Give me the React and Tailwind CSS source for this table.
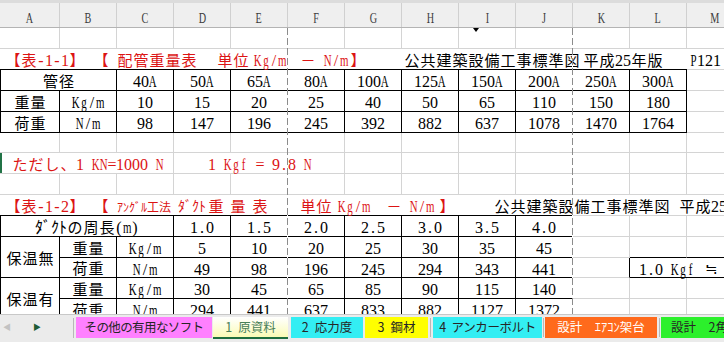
import React from "react";

// Excel-like sheet: 配管重量表 / ダクト重量表
const FONT = "font-['Liberation_Serif','Noto_Sans_CJK_JP',serif]";
const RED = "text-[#dc1414]";
const COLS = ["A", "B", "C", "D", "E", "F", "G", "H", "I", "J", "K", "L", "M"];

const isKana = (code) => code >= 0xff61 && code <= 0xff9f;

// half-width chars on an 8px grid (like ＭＳ 明朝), full-width ones on 16px
const Txt = ({ s, kw = "w-[8px]" }) =>
  Array.from(s).map((ch, i) => {
    const code = ch.charCodeAt(0);
    if (code < 128)
      return (
        <span key={i} className="flex w-[8px] shrink-0 justify-center">
          <span className={/[A-Za-z]/.test(ch) ? "scale-x-[0.68]" : ""}>{ch === " " ? "\u00a0" : ch}</span>
        </span>
      );
    if (isKana(code))
      return (
        <span key={i} className={`flex ${kw} shrink-0 justify-center`}>
          {ch}
        </span>
      );
    return (
      <span key={i} className="flex w-[16px] shrink-0 justify-center text-[15px]">
        {ch}
      </span>
    );
  });

const Seg = ({ w = "", s, red, cls = "", kw }) => (
  <span className={`flex shrink-0 items-center ${w} ${red ? RED : "text-black"} ${cls}`}>
    <Txt s={s} kw={kw} />
  </span>
);

const TITLES = {
  1: (
    <div className="flex shrink-0 pl-[5px]">
      <Seg w="w-[88px]" s="【表-1-1】" red />
      <Seg w="w-[24px]" s="【" red />
      <Seg w="w-[100px]" s="配管重量表" red />
      <Seg w="w-[37px]" s="単位" red />
      <Seg w="w-[46px]" s="Kg/m" red />
      <Seg w="w-[24px]" s="－" red />
      <Seg w="w-[26px]" s="N/m" red />
      <Seg w="w-[54px]" s="】" red />
      <Seg w="w-[179px]" s="公共建築設備工事標準図" />
      <Seg w="w-[106px]" s="平成25年版" />
      <Seg s="P121" />
    </div>
  ),
  2: (
    <div className="flex shrink-0 pl-[5px]">
      <Seg w="w-[88px]" s="【表-1-2】" red />
      <Seg w="w-[24px]" s="【" red />
      <span className={`flex w-[61px] shrink-0 items-center pt-[1px] text-[12px] ${RED}`}>ｱﾝｸﾞﾙ工法</span>
      <span className={`flex w-[30px] shrink-0 items-center text-[14px] ${RED}`}>ﾀﾞｸﾄ</span>
      <Seg w="w-[92px]" s="重量表" red cls="gap-[6px]" />
      <Seg w="w-[38px]" s="単位" red />
      <Seg w="w-[48px]" s="Kg/m" red />
      <Seg w="w-[24px]" s="－" red />
      <Seg w="w-[29px]" s="N/m" red />
      <Seg w="w-[55px]" s="】" red />
      <Seg w="w-[185px]" s="公共建築設備工事標準図" />
      <Seg s="平成25" />
    </div>
  ),
  3: (
    <div className="flex shrink-0 pl-[12px]">
      <Seg w="w-[64px]" s="ただし、" red />
      <Seg w="w-[132px]" s="1 KN=1000 N" red />
      <Seg s="1 Kgf = 9.8 N" red />
    </div>
  ),
};

const blanks = (n, extra = {}) => Array.from({ length: n }, () => ({ ...extra }));
const t = (s, extra = {}) => ({ s: String(s), tb: true, ...extra });

const rows = [
  blanks(13),
  [{ title: 1, hideR: true }, ...blanks(12, { hideR: true })],
  [t("管径", { cs: 2 }), ...["40A", "50A", "65A", "80A", "100A", "125A", "150A", "200A", "250A", "300A"].map((v) => t(v)), {}],
  [t("重量"), t("Kg/m"), ...[10, 15, 20, 25, 40, 50, 65, 110, 150, 180].map((v) => t(v)), {}],
  [t("荷重"), t("N/m"), ...[98, 147, 196, 245, 392, 882, 637, 1078, 1470, 1764].map((v) => t(v)), {}],
  blanks(13),
  [
    { title: 3, hideR: true, cls: "shadow-[inset_2px_0_0_#217346]" },
    { hideR: true },
    {},
    { hideR: true },
    { hideR: true },
    ...blanks(8),
  ],
  blanks(13),
  [{ title: 2, hideR: true }, ...blanks(12, { hideR: true })],
  [t("ﾀﾞｸﾄの周長(m)", { cs: 3 }), ...["1.0", "1.5", "2.0", "2.5", "3.0", "3.5", "4.0"].map((v) => t(v)), ...blanks(3)],
  [t("保温無", { rs: 2 }), t("重量"), t("Kg/m"), ...[5, 10, 20, 25, 30, 35, 45].map((v) => t(v)), ...blanks(3)],
  [t("荷重"), t("N/m"), ...[49, 98, 196, 245, 294, 343, 441].map((v) => t(v)), {}, t("1.0 Kgf ≒", { cs: 2, left: true })],
  [t("保温有", { rs: 2 }), t("重量"), t("Kg/m"), ...[30, 45, 65, 85, 90, 115, 140].map((v) => t(v)), ...blanks(3)],
  [t("荷重"), t("N/m"), ...[294, 441, 637, 833, 882, 1127, 1372].map((v) => t(v)), ...blanks(3)],
];

// place cells like grid auto-placement and work out which borders are black
const cells = (() => {
  const occ = rows.map(() => Array(13).fill(null));
  const out = [];
  rows.forEach((row, r) => {
    let c = 0;
    row.forEach((spec) => {
      while (occ[r][c]) c++;
      const cell = { cs: 1, rs: 1, ...spec, r, c };
      for (let i = r; i < r + cell.rs; i++) for (let j = c; j < c + cell.cs; j++) occ[i][j] = cell;
      out.push(cell);
      c += cell.cs;
    });
  });
  out.forEach((cell) => {
    const right = occ[cell.r][cell.c + cell.cs];
    const below = occ[cell.r + cell.rs]?.[cell.c];
    if (cell.tb || right?.tb) cell.br = "border-r border-r-black";
    else if (cell.hideR) cell.br = "";
    else cell.br = "border-r border-r-[#d4d4d4]";
    cell.bb = cell.tb || below?.tb ? "border-b border-b-black" : "border-b border-b-[#d4d4d4]";
    cell.bl = cell.tb && cell.c === 0 ? "border-l border-l-black" : "";
  });
  return out;
})();

function Cell({ cell }) {
  const span = `${cell.cs === 2 ? "col-span-2" : cell.cs === 3 ? "col-span-3" : ""} ${cell.rs === 2 ? "row-span-2" : ""}`;
  const align = cell.title || cell.left ? "justify-start" : "justify-center";
  let content = null;
  if (cell.title) content = TITLES[cell.title];
  else if (cell.s) content = <Txt s={cell.s} />;
  return (
    <div
      className={`flex items-center whitespace-nowrap pt-[4px] ${align} ${span} ${cell.br} ${cell.bb} ${cell.bl} ${
        cell.title ? "relative z-10" : ""
      } ${cell.left ? "pl-[9px]" : ""} ${cell.cls ?? ""}`}
    >
      {content}
    </div>
  );
}

function Header() {
  return (
    <>
      <div className="h-[3px] bg-[#dcdcdc]" />
      <div className="flex h-[25px] border-b border-[#b4b4b4] bg-[#efefef]">
        {COLS.map((c, i) => (
          <div
            key={c}
            className={`${i === 0 ? "w-[60px]" : "w-[57px]"} flex shrink-0 items-center justify-center border-r border-[#d0d0d0] pt-[7px] text-[15px] text-[#3c3c3c]`}
          >
            <Txt s={c} />
          </div>
        ))}
      </div>
    </>
  );
}

function Tabs() {
  return (
    <div className="flex h-[28px] items-start border-t border-[#c8c8c8] bg-[#ebebeb] pt-[1px] font-['Noto_Sans_CJK_JP',sans-serif] text-[12.5px] leading-none">
      <div className="flex h-[22px] w-[73px] shrink-0 items-center">
        <span className="ml-[3px] text-[8px] text-[#c2c2c2]">◀</span>
        <span className="ml-[22px] text-[8px] text-[#1f5c36]">▶</span>
      </div>
      <div className="mt-[2px] h-[20px] w-px shrink-0 bg-[#b8b8b8]" />
      <div className="ml-[2px] mt-[1px] flex h-[21px] w-[136px] shrink-0 items-center justify-center bg-[#ff80ff] tracking-[-0.6px] text-[#262626]">
        その他の有用なソフト
      </div>
      <div className="ml-[1px] mt-[1px] flex h-[22px] w-[75px] shrink-0 items-center justify-center border-b-2 border-[#1e6e3e] bg-linear-to-b from-white to-[#fbfbb4] text-[#4a8058]">
        1{"\u2002"}原資料
      </div>
      <div className="ml-[3px] mt-[1px] flex h-[21px] w-[72px] shrink-0 items-center justify-center bg-[#33eef3] text-[#262626]">
        2{"\u2002"}応力度
      </div>
      <div className="ml-[2px] mt-[1px] flex h-[21px] w-[63px] shrink-0 items-center justify-center bg-[#ffff00] text-[#262626]">
        3{"\u2002"}鋼材
      </div>
      <div className="ml-[2px] mt-[2px] h-[19px] w-px shrink-0 bg-[#b8b8b8]" />
      <div className="ml-[2px] mt-[1px] flex h-[21px] w-[109px] shrink-0 items-center justify-center bg-[#33eef3] tracking-[-0.4px] text-[#262626]">
        4{"\u2002"}アンカーボルト
      </div>
      <div className="ml-[1px] mt-[2px] h-[19px] w-px shrink-0 bg-[#b8b8b8]" />
      <div className="ml-[1px] mt-[1px] flex h-[21px] w-[112px] shrink-0 items-center justify-center bg-[#ff6a1c] text-white">
        設計　ｴｱｺﾝ架台
      </div>
      <div className="ml-[2px] mt-[2px] h-[19px] w-px shrink-0 bg-[#b8b8b8]" />
      <div className="ml-[1px] mt-[1px] flex h-[21px] w-[110px] shrink-0 items-center overflow-hidden whitespace-nowrap bg-[#2cf02c] pl-[10px] text-[#262626]">
        設計　2角形架台
      </div>
    </div>
  );
}

export default function App() {
  return (
    <div className={`h-[342px] w-[724px] overflow-hidden bg-white ${FONT} text-[16px] leading-none`}>
      <div className="relative h-[314px] overflow-hidden">
        <Header />
        <div className="grid w-max grid-cols-[60px_repeat(12,57px)] grid-rows-[21px_21px_21px_21px_21px_20px_21px_21px_21px_21px_21px_20px_21px_21px] text-black">
          {cells.map((cell, i) => (
            <Cell key={i} cell={cell} />
          ))}
        </div>
        {/* page break lines */}
        <div className="absolute left-[287px] top-[28px] z-20 h-[286px] w-px bg-[repeating-linear-gradient(to_bottom,#8c8c8c_0px,#8c8c8c_7px,#ffffff_7px,#ffffff_10px)]" />
        <div className="absolute left-[572px] top-[28px] z-20 h-[286px] w-px bg-[repeating-linear-gradient(to_bottom,#8c8c8c_0px,#8c8c8c_7px,#ffffff_7px,#ffffff_10px)]" />
        <div className="absolute left-[473px] top-[28px] z-20 h-0 w-0 border-x-[3px] border-t-[4px] border-x-transparent border-t-black" />
      </div>
      <Tabs />
    </div>
  );
}
